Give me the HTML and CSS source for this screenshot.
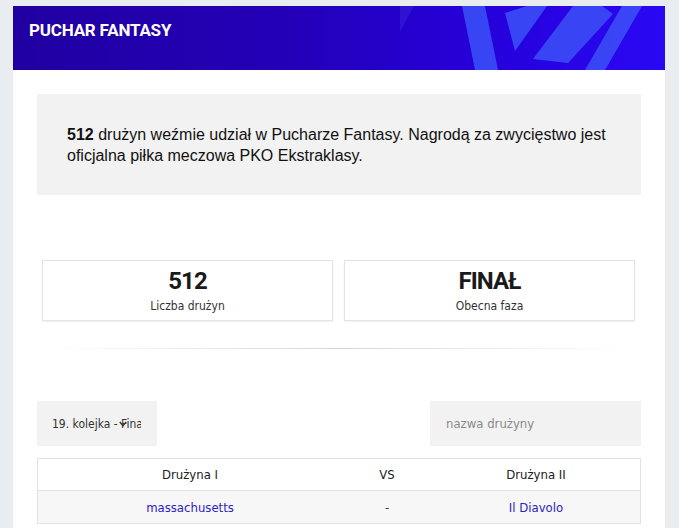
FILE: index.html
```html
<!DOCTYPE html>
<html lang="pl">
<head>
<meta charset="utf-8">
<title>Puchar Fantasy</title>
<link rel="stylesheet" href="styles.css">
</head>
<body>
<div class="card">
  <header class="hero">
    <h1 class="hero-title">PUCHAR FANTASY</h1>
    <svg class="hero-art" viewBox="0 0 652 64" preserveAspectRatio="none" aria-hidden="true">
      <polygon class="glow" points="387,0 401,0 387,26"/>
      <polygon class="shape" points="449,0 472,0 485,64 462,64"/>
      <polygon class="shape" points="492,7 514,0 534,0 502,45"/>
      <polygon class="shape" points="560,0 589,0 600,8 555,57 520,53"/>
      <polygon class="shape" points="609,0 629,0 592,64 572,64"/>
    </svg>
  </header>
  <main class="content">
    <section class="info">
      <p><strong>512</strong> drużyn weźmie udział w Pucharze Fantasy. Nagrodą za zwycięstwo jest oficjalna piłka meczowa PKO Ekstraklasy.</p>
    </section>
    <section class="stats">
      <div class="stat">
        <div class="stat-value">512</div>
        <div class="stat-label">Liczba drużyn</div>
      </div>
      <div class="stat">
        <div class="stat-value">FINAŁ</div>
        <div class="stat-label">Obecna faza</div>
      </div>
    </section>
    <hr class="divider">
    <section class="filters">
      <div class="select">
        <span class="select-text">19. kolejka - Finał</span>
        <svg class="select-arrow" viewBox="0 0 8 6" aria-hidden="true"><polyline points="0.8,1 4,4.6 7.2,1"/></svg>
      </div>
      <div class="search">nazwa drużyny</div>
    </section>
    <table class="matches">
      <thead>
        <tr><th class="c1">Drużyna I</th><th class="c2">VS</th><th class="c3">Drużyna II</th></tr>
      </thead>
      <tbody>
        <tr><td class="c1"><a href="#">massachusetts</a></td><td class="c2">-</td><td class="c3"><a href="#">Il Diavolo</a></td></tr>
      </tbody>
    </table>
  </main>
</div>
</body>
</html>
```

FILE: styles.css
```css
body {
  margin: 0;
  background: #eaedef;
  font-family: "Liberation Sans", Arial, sans-serif;
}

.card {
  margin: 6px 14px 0 13px;
  background: #ffffff;
  min-height: 540px;
}

.hero {
  position: relative;
  height: 64px;
  overflow: hidden;
  background: linear-gradient(90deg, #2100a2 0%, #2300b6 40%, #2600d8 70%, #2a08f4 100%);
}

.hero-title {
  position: relative;
  z-index: 1;
  margin: 0;
  padding: 13px 16px;
  color: #ffffff;
  font-family: Roboto, "DejaVu Sans Condensed", sans-serif;
  font-weight: 700;
  font-size: 17px;
  line-height: 22px;
  letter-spacing: -0.2px;
}

.hero-art {
  position: absolute;
  inset: 0;
  width: 100%;
  height: 100%;
}

.hero-art .shape {
  fill: #3b4cf6;
  opacity: 0.9;
}

.hero-art .glow {
  fill: #5050e0;
  opacity: 0.22;
}

.content {
  padding: 24px 24px 0;
}

.info {
  background: #f2f2f2;
  padding: 30px 30px 29px;
}

.info p {
  margin: 0;
  font-size: 16px;
  line-height: 21px;
  color: #111111;
}

.stats {
  display: flex;
  gap: 11px;
  margin: 65px 6px 0 5px;
}

.stat {
  flex: 1;
  height: 61px;
  box-sizing: border-box;
  border: 1px solid #e3e3e3;
  box-shadow: 0 1px 2px rgba(0, 0, 0, 0.06);
  text-align: center;
  padding-top: 6px;
  font-family: "DejaVu Sans Condensed", Roboto, sans-serif;
}

.stat-value {
  font-family: Roboto, "DejaVu Sans Condensed", sans-serif;
  font-weight: 700;
  font-size: 24px;
  line-height: 28px;
  letter-spacing: -1px;
  color: #1a1a1a;
}

.stat-label {
  margin-top: 3px;
  font-size: 12px;
  line-height: 16px;
  color: #333333;
}

.divider {
  height: 1px;
  border: 0;
  margin: 27px 10px 0;
  background: linear-gradient(90deg, rgba(220, 220, 220, 0), #d6d6d6 50%, rgba(220, 220, 220, 0));
}

.filters {
  display: flex;
  justify-content: space-between;
  margin-top: 52px;
  font-family: "DejaVu Sans Condensed", Roboto, sans-serif;
  font-size: 13px;
}

.select {
  position: relative;
  width: 120px;
  height: 45px;
  box-sizing: border-box;
  padding: 0 16px 0 15px;
  background: #f2f2f2;
  display: flex;
  align-items: center;
  overflow: hidden;
  color: #333333;
  font-size: 12px;
}

.select-text {
  white-space: nowrap;
  overflow: hidden;
}

.select-arrow {
  position: absolute;
  left: 82px;
  top: 20px;
  width: 8px;
  height: 6px;
  fill: none;
  stroke: #333333;
  stroke-width: 1.4;
}

.search {
  width: 211px;
  height: 45px;
  box-sizing: border-box;
  padding-left: 16px;
  background: #f2f2f2;
  display: flex;
  align-items: center;
  color: #8a8a8a;
}

.matches {
  width: 100%;
  margin-top: 12px;
  border-collapse: collapse;
  border: 1px solid #e2e2e2;
  font-family: "DejaVu Sans Condensed", Roboto, sans-serif;
  font-size: 13px;
  table-layout: fixed;
}

.matches th {
  height: 31px;
  padding: 0;
  font-weight: 400;
  color: #222222;
  text-align: center;
}

.matches td {
  height: 32px;
  padding: 0;
  background: #f7f7f7;
  border-top: 1px solid #e2e2e2;
  text-align: center;
  color: #333333;
}

.matches .c1 { width: 304px; }
.matches .c2 { width: 90px; }

.matches a {
  color: #2d22c8;
  text-decoration: none;
}
```
